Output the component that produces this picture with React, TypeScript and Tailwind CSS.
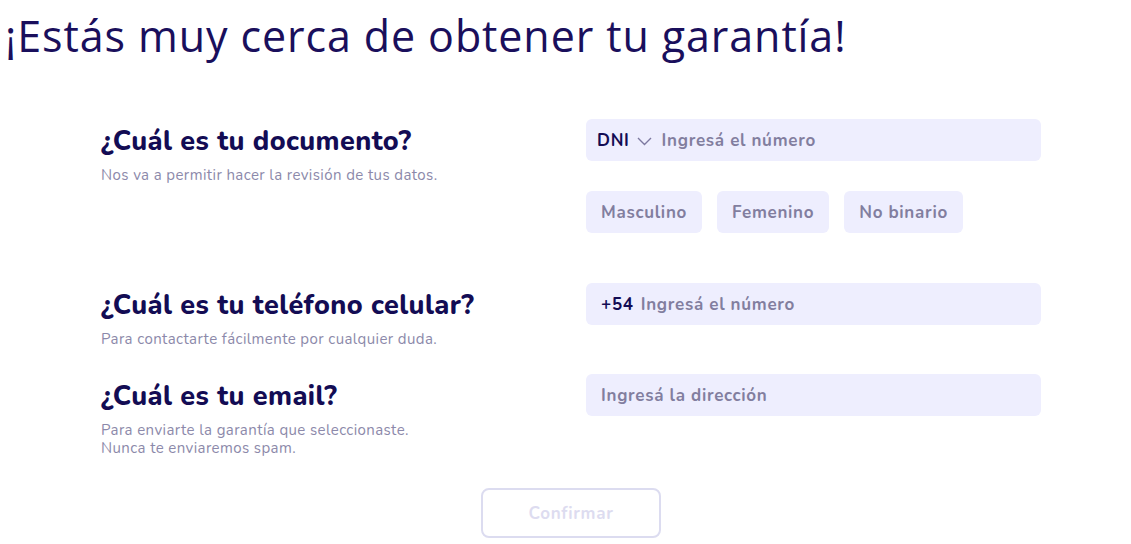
const font = { fontFamily: "Nunito, Lato, 'Noto Sans', sans-serif" };

function Question({ title, lines }: { title: string; lines: string[] }) {
  return (
    <div className="w-[485px] shrink-0">
      <h2 className="h-[42px] pt-[2px] flex items-center text-[27px] font-extrabold tracking-[0.4px] text-[#130c54] leading-none">
        {title}
      </h2>
      <p className="mt-[5px] text-[15px] leading-[18px] tracking-[0.4px] text-[#8c89aa]">
        {lines.map((l) => (
          <span key={l} className="block">
            {l}
          </span>
        ))}
      </p>
    </div>
  );
}

function Chevron() {
  return (
    <svg width="15" height="9" viewBox="0 0 15 9" className="ml-[7px]">
      <polyline points="1,1 7.5,7.5 14,1" fill="none" stroke="#7d79a0" strokeWidth="1.4" />
    </svg>
  );
}

function Field({ prefix, placeholder, select }: { prefix?: string; placeholder: string; select?: boolean }) {
  return (
    <div
      className={`w-[455px] h-[42px] pt-[2px] rounded-md bg-[#eeeefe] flex items-center text-[17px] font-bold tracking-[0.7px] ${
        select ? "pl-[11px]" : "pl-[15px]"
      }`}
    >
      {prefix && (
        <span className={`flex items-center text-[#130c54] ${select ? "mr-[10px]" : "mr-[7px]"}`}>
          {prefix}
          {select && <Chevron />}
        </span>
      )}
      <span className="text-[#827e9f]">{placeholder}</span>
    </div>
  );
}

export default function App() {
  return (
    <div className="w-[1131px] h-[544px] bg-white overflow-hidden" style={font}>
      <h1
        className="pl-[5px] pt-[10px] text-[43px] leading-[52px] font-normal tracking-[0.9px] text-[#1a0f5c]"
        style={{ fontFamily: "'Open Sans', 'Noto Sans', sans-serif" }}
      >
        ¡Estás muy cerca de obtener tu garantía!
      </h1>
      <div className="ml-[101px] w-[940px] mt-[57px] flex flex-col">
        <div className="flex items-start">
          <Question title="¿Cuál es tu documento?" lines={["Nos va a permitir hacer la revisión de tus datos."]} />
          <div className="flex flex-col">
            <Field prefix="DNI" select placeholder="Ingresá el número" />
            <div className="mt-[30px] flex gap-[15px]">
              {["Masculino", "Femenino", "No binario"].map((g) => (
                <button
                  key={g}
                  className="h-[42px] pt-[2px] px-[15px] rounded-md bg-[#eeeefe] text-[17px] font-bold tracking-[0.7px] text-[#827e9f]"
                >
                  {g}
                </button>
              ))}
            </div>
          </div>
        </div>
        <div className="mt-[50px] flex items-start">
          <Question title="¿Cuál es tu teléfono celular?" lines={["Para contactarte fácilmente por cualquier duda."]} />
          <Field prefix="+54" placeholder="Ingresá el número" />
        </div>
        <div className="mt-[26px] flex items-start">
          <Question
            title="¿Cuál es tu email?"
            lines={["Para enviarte la garantía que seleccionaste.", "Nunca te enviaremos spam."]}
          />
          <Field placeholder="Ingresá la dirección" />
        </div>
        <div className="mt-[31px] flex justify-center">
          <button className="w-[180px] h-[50px] pt-[2px] rounded-lg border-2 border-[#dcdcf0] text-[17px] font-bold tracking-[0.7px] text-[#dddcf0]">
            Confirmar
          </button>
        </div>
      </div>
    </div>
  );
}
